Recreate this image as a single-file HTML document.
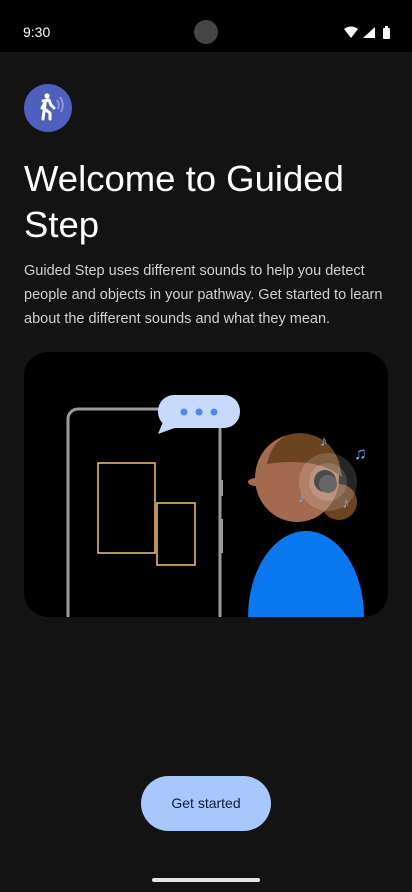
<!DOCTYPE html>
<html><head><meta charset="utf-8"><style>
body{margin:0;width:412px;height:892px;background:#000;overflow:hidden;font-family:"Liberation Sans",sans-serif}
.scr{position:absolute;left:0;top:0;width:412px;height:892px;background:#131313;border-radius:28px 28px 0 0;overflow:hidden}
.sb{position:absolute;left:0;top:0;width:412px;height:52px;background:#000}
</style></head><body>
<div class="scr">
<div class="sb">
<div style="position:absolute;left:23px;top:24px;color:#fff;font-size:14px">9:30</div>
<div style="position:absolute;left:194px;top:20px;width:24px;height:24px;border-radius:50%;background:#454545"></div>
<svg style="position:absolute;left:343px;top:26px" width="50" height="14" viewBox="0 0 50 14">
<path d="M1 3 Q8 -2 15 3 L8 12 Z" fill="#fff"/>
<path d="M20 12 L32 12 L32 1 Z" fill="#fff"/>
<rect x="40" y="2" width="7" height="11" rx="1" fill="#fff"/><rect x="42" y="0" width="3" height="3" fill="#fff"/>
</svg>
</div>
<svg style="position:absolute;left:24px;top:84px" width="48" height="48" viewBox="0 0 48 48">
<circle cx="24" cy="24" r="24" fill="#4f5fbf"/>
<circle cx="23" cy="12" r="2.6" fill="#fff"/>
<path d="M19 17 L25 16 L27 21 L30 24 M22 17 L18 24 M21 20 L19 35 M22 26 L26 29 L26 35" stroke="#fff" stroke-width="3" fill="none" stroke-linecap="round" stroke-linejoin="round"/>
<path d="M33 16 Q36 20 34 25 M36 13 Q41 20 37 28" stroke="#8a96d8" stroke-width="2" fill="none"/>
</svg>
<div style="position:absolute;left:24px;top:156px;color:#fff;font-size:36.5px;line-height:46px;width:370px">Welcome to Guided Step</div>
<div style="position:absolute;left:24px;top:259px;color:#d0d0d0;font-size:14.5px;line-height:24px;width:370px">Guided Step uses different sounds to help you detect people and objects in your pathway. Get started to learn about the different sounds and what they mean.</div>
<svg style="position:absolute;left:24px;top:352px" width="364" height="265" viewBox="0 0 364 265">
<defs><clipPath id="c"><rect width="364" height="265" rx="24"/></clipPath></defs>
<g clip-path="url(#c)">
<rect width="364" height="265" fill="#000"/>
<rect x="44" y="57" width="152" height="230" rx="10" fill="none" stroke="#9a9a9a" stroke-width="3"/>
<rect x="195" y="128" width="4" height="16" fill="#9a9a9a"/><rect x="195" y="167" width="4" height="34" fill="#9a9a9a"/>
<rect x="74" y="111" width="57" height="90" fill="none" stroke="#f3c576" stroke-width="1.5"/>
<rect x="133" y="151" width="38" height="62" fill="none" stroke="#f3c576" stroke-width="1.5"/>
<path d="M150 43 L134 82 L156 74 Z" fill="#c6dafc"/>
<rect x="134" y="43" width="82" height="33" rx="16" fill="#c6dafc"/>
<circle cx="160" cy="60" r="3.5" fill="#4f86f0"/><circle cx="175" cy="60" r="3.5" fill="#4f86f0"/><circle cx="190" cy="60" r="3.5" fill="#4f86f0"/>
<circle cx="315" cy="150" r="18" fill="#6c4321"/>
<ellipse cx="273" cy="126" rx="42" ry="44" fill="#a46a4f"/>
<path d="M243 112 Q250 82 275 81 Q305 82 315 110 L318 125 Q300 110 268 110 Q255 110 243 112 Z" fill="#6c4321"/>
<ellipse cx="232" cy="130" rx="8" ry="4" fill="#a46a4f"/>
<circle cx="304" cy="130" r="29" fill="#ffffff" opacity="0.15"/>
<circle cx="304" cy="130" r="19" fill="#ffffff" opacity="0.15"/>
<circle cx="301" cy="129" r="11" fill="#4a4a4a"/><circle cx="304" cy="132" r="9" fill="#666"/>
<ellipse cx="282" cy="265" rx="58" ry="86" fill="#0b78f0"/>
<text x="296" y="94" fill="#7ba7f5" font-size="15" font-weight="bold">♪</text>
<text x="330" y="107" fill="#7ba7f5" font-size="17" font-weight="bold">♫</text>
<text x="274" y="150" fill="#7ba7f5" font-size="14" font-weight="bold">♪</text>
<text x="318" y="156" fill="#7ba7f5" font-size="15" font-weight="bold">♪</text>
</g></svg>
<div style="position:absolute;left:141px;top:776px;width:130px;height:55px;border-radius:28px;background:#a8c7fa;color:#0b1d3a;font-size:14px;line-height:55px;text-align:center">Get started</div>
<div style="position:absolute;left:152px;top:878px;width:108px;height:4px;border-radius:2px;background:#e6e6e6"></div>
</div>
</body></html>
